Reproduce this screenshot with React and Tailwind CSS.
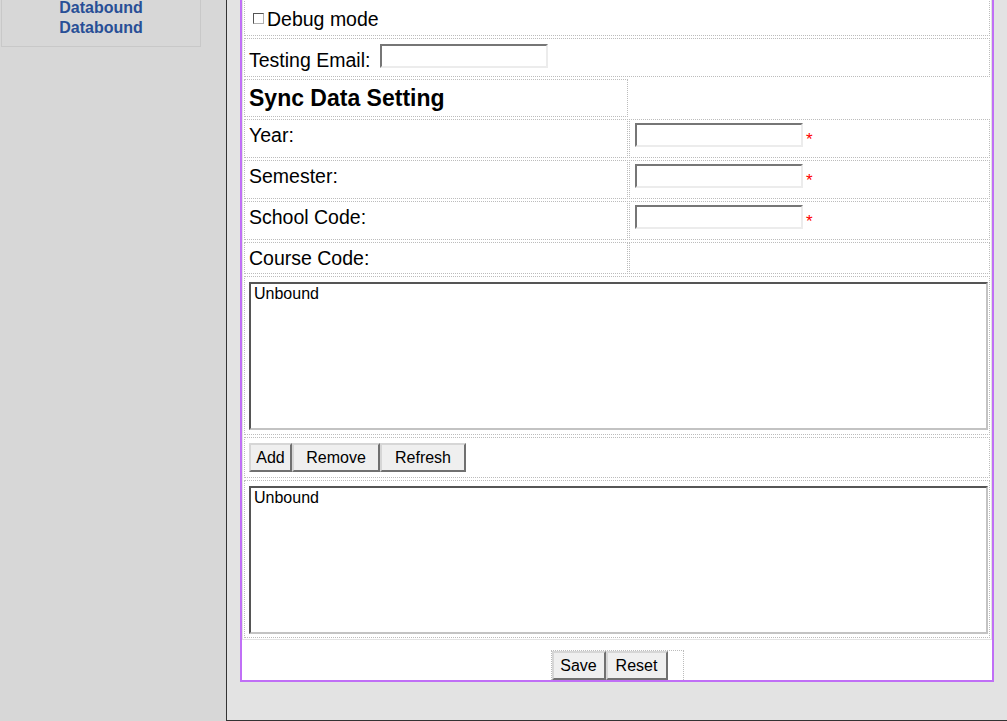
import React from "react";

const dot = "border border-dotted border-[#bcbcbc]";
const label = "text-[19.5px] leading-[22px]";
const btn =
  "h-[29px] border-2 border-t-[#d6d6d6] border-l-[#d6d6d6] border-r-[#707070] border-b-[#707070] bg-[#efefef] text-[16px] leading-none text-black";
const field =
  "h-[24px] w-[168px] shrink-0 border-2 border-t-[#767676] border-l-[#767676] border-r-[#ececec] border-b-[#ececec] bg-white";
const listbox =
  "ml-[4px] mr-px h-[148px] border-2 border-t-[#555] border-l-[#555] border-r-[#c3c3c3] border-b-[#c3c3c3] bg-white pl-[3px] pt-px text-[16px] leading-[18px]";

function FieldRow({ name, required }) {
  return (
    <div className="grid h-[39px] grid-cols-[384px_1fr] gap-x-px">
      <div className={`${dot} pl-[4px] pt-[4px] ${label}`}>{name}</div>
      <div className={`${dot} flex items-start pl-[5px] pt-[3px]`}>
        {required && (
          <>
            <div className={field} />
            <span className="ml-[3px] mt-[8px] text-[17px] leading-[18px] text-[#f00]">*</span>
          </>
        )}
      </div>
    </div>
  );
}

export default function App() {
  return (
    <div className="flex h-[721px] w-[1007px] overflow-hidden font-['Liberation_Sans',Arial,sans-serif] text-black">
      <aside className="w-[226px] shrink-0 bg-[#d7d7d7]">
        <div className="ml-px mt-[-3px] w-[200px] border border-[#c8c8c8] pb-[8px] text-center text-[16px] font-bold leading-[20px] text-[#284f96]">
          <div>Databound</div>
          <div>Databound</div>
        </div>
      </aside>

      <main className="flex-1 border-b border-l border-[#333] bg-[#e3e3e3] px-[13px]">
        <div className="mt-[-7px] border-2 border-[#c06ff6] bg-white">
          <div className="flex flex-col gap-[2px] border border-[#e2e2e2] p-px">
            {/* debug */}
            <div className={`${dot} flex h-[39px] items-start pl-[4px]`}>
              <span className="ml-[4px] mt-[15px] h-[11px] w-[11px] shrink-0 border border-t-[#555] border-l-[#555] border-r-[#b0b0b0] border-b-[#b0b0b0] bg-white" />
              <span className={`ml-[3px] pt-[10px] ${label}`}>Debug mode</span>
            </div>

            {/* testing email */}
            <div className={`${dot} flex h-[39px] items-start pl-[4px]`}>
              <span className={`w-[131px] shrink-0 pt-[10px] ${label}`}>Testing Email:</span>
              <div className={`${field} mt-[5px]`} />
            </div>

            {/* section title */}
            <div className="grid h-[38px] grid-cols-[384px_1fr] gap-x-px">
              <div className={`${dot} pl-[4px] pt-[5px] text-[23px] font-bold leading-[26px]`}>
                Sync Data Setting
              </div>
              <div />
            </div>

            <FieldRow name="Year:" required />
            <FieldRow name="Semester:" required />
            <FieldRow name="School Code:" required />

            <div className="grid h-[32px] grid-cols-[384px_1fr] gap-x-px">
              <div className={`${dot} pl-[4px] pt-[4px] ${label}`}>Course Code:</div>
              <div className={dot} />
            </div>

            <div className={`${dot} h-[159px] pt-[5px]`}>
              <div className={listbox}>Unbound</div>
            </div>

            <div className={`${dot} flex h-[41px] items-start pl-[4px] pt-[5px]`}>
              <button className={`${btn} w-[43px]`}>Add</button>
              <button className={`${btn} w-[88px]`}>Remove</button>
              <button className={`${btn} w-[86px]`}>Refresh</button>
            </div>

            <div className={`${dot} h-[158px] pt-[5px]`}>
              <div className={listbox}>Unbound</div>
            </div>
          </div>

          <div className="h-[40px] pt-[10px]">
            <div className="mx-auto flex h-[30px] w-[133px] border border-b-0 border-dotted border-[#bcbcbc]">
              <button className={`${btn} w-[54px]`}>Save</button>
              <button className={`${btn} w-[62px]`}>Reset</button>
            </div>
          </div>
        </div>
      </main>
    </div>
  );
}
